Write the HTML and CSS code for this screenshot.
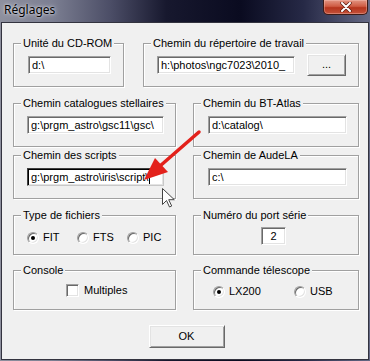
FILE: index.html
```html
<!DOCTYPE html>
<html lang="fr">
<head>
<meta charset="utf-8">
<title>Réglages</title>
<link rel="stylesheet" href="styles.css">
</head>
<body>
<div class="window">
  <div class="titlebar">
    <span class="title">Réglages</span>
    <div class="close">
      <svg width="12" height="10" viewBox="0 0 12 10"><path d="M2 1 L10 9 M10 1 L2 9" stroke="#5a1a10" stroke-width="3.4" stroke-linecap="round"/><path d="M2 1 L10 9 M10 1 L2 9" stroke="#fff" stroke-width="2" stroke-linecap="round"/></svg>
    </div>
  </div>
  <div class="client">
    <div class="row r1">
      <div class="group g-cd">
        <span class="legend">Unité du CD-ROM</span>
        <div class="body b-cd"><span class="edit w-cd">d:\</span></div>
      </div>
      <div class="group g-work">
        <span class="legend">Chemin du répertoire de travail</span>
        <div class="body b-work"><span class="edit w-work">h:\photos\ngc7023\2010_</span><span class="btn btn-dots">...</span></div>
      </div>
    </div>
    <div class="row r2">
      <div class="group g-left">
        <span class="legend">Chemin catalogues stellaires</span>
        <div class="body b-left"><span class="edit w-left">g:\prgm_astro\gsc11\gsc\</span></div>
      </div>
      <div class="group g-right">
        <span class="legend">Chemin du BT-Atlas</span>
        <div class="body b-right"><span class="edit w-right">d:\catalog\</span></div>
      </div>
    </div>
    <div class="row r3">
      <div class="group g-left">
        <span class="legend">Chemin des scripts</span>
        <div class="body b-left"><span class="edit w-left focus">g:\prgm_astro\iris\script\<span class="caret"></span></span></div>
      </div>
      <div class="group g-right">
        <span class="legend">Chemin de AudeLA</span>
        <div class="body b-right"><span class="edit w-right">c:\</span></div>
      </div>
    </div>
    <div class="row r4">
      <div class="group g-left short">
        <span class="legend">Type de fichiers</span>
        <div class="body b-radios">
          <span class="opt o-ft"><span class="radio on"></span>FIT</span>
          <span class="opt o-ft"><span class="radio"></span>FTS</span>
          <span class="opt"><span class="radio"></span>PIC</span>
        </div>
      </div>
      <div class="group g-right short">
        <span class="legend">Numéro du port série</span>
        <div class="body b-port"><span class="edit w-port">2</span></div>
      </div>
    </div>
    <div class="row r5">
      <div class="group g-left short">
        <span class="legend">Console</span>
        <div class="body b-console"><span class="opt"><span class="check"></span>Multiples</span></div>
      </div>
      <div class="group g-right short">
        <span class="legend">Commande télescope</span>
        <div class="body b-tel">
          <span class="opt o-lx"><span class="radio on"></span>LX200</span>
          <span class="opt"><span class="radio"></span>USB</span>
        </div>
      </div>
    </div>
    <div class="actions"><span class="btn btn-ok">OK</span></div>
  </div>
  <svg class="overlay" width="370" height="361" viewBox="0 0 370 361">
    <line x1="199" y1="132" x2="160" y2="166" stroke="#e3211b" stroke-width="3.5" stroke-linecap="round"/>
    <polygon points="144,180 155,158 168,172" fill="#e3211b"/>
    <path d="M162.5 188.5 V204.5 L166.5 200.5 L169.5 207 L171.7 206 L168.7 199.7 H174.3 Z" fill="#fff" stroke="#444" stroke-width="1" stroke-linejoin="round"/>
  </svg>
</div>
</body>
</html>
```
FILE: styles.css
```css
* { box-sizing: border-box; }
html, body { margin: 0; padding: 0; }
body {
  width: 370px;
  height: 361px;
  overflow: hidden;
  font-family: "Liberation Sans", Arial, sans-serif;
  font-size: 11px;
  color: #000;
  background: #000;
}
.window {
  position: relative;
  width: 370px;
  height: 361px;
  padding: 0 1px 1px 1px;
  display: flex;
  flex-direction: column;
  background: linear-gradient(90deg, #8e909e 0%, #7c7f92 14%, #4b4d66 30%, #17182e 45%, #0a0b20 65%, #262946 82%, #656985 100%);
}
.titlebar {
  height: 22px;
  flex: none;
  display: flex;
  justify-content: space-between;
  align-items: flex-start;
}
.title {
  font-family: "Noto Sans", "Liberation Sans", sans-serif;
  font-size: 12px;
  line-height: 16px;
  padding: 2px 0 0 3px;
  color: #000;
  text-shadow: 0 0 5px rgba(230, 232, 240, 0.9), 0 0 2px rgba(230, 232, 240, 0.9);
}
.close {
  width: 45px;
  height: 15px;
  margin-right: 1px;
  border: 1px solid #3c1a16;
  border-top: none;
  border-radius: 0 0 5px 5px;
  background: linear-gradient(#e29482, #cf5c44 45%, #b5341d 55%, #c4523a);
  box-shadow: inset 0 0 0 1px rgba(255, 210, 200, 0.35);
  display: flex;
  align-items: center;
  justify-content: center;
}
.client {
  flex: 1;
  background: #f0f0f0;
  border: 1px solid #33333f;
  padding: 20px 9px 0 11px;
  display: flex;
  flex-direction: column;
}
.row {
  display: flex;
  justify-content: space-between;
}
.r2 { margin-top: 16px; }
.r3 { margin-top: 8px; }
.r4 { margin-top: 16px; }
.r5 { margin-top: 15px; }
.group {
  height: 44px;
  border: 1px solid #a0a0a0;
  box-shadow: inset 1px 1px 0 #fff, 1px 1px 0 #fff;
}
.group.short { height: 40px; }
.g-cd { width: 111px; }
.g-work { width: 216px; }
.g-left { width: 163px; }
.g-right { width: 166px; }
.legend {
  display: block;
  width: fit-content;
  margin: -7px 0 0 7px;
  padding: 0 2px;
  line-height: 13px;
  background: #f0f0f0;
  white-space: nowrap;
}
.body { display: flex; align-items: center; }
.b-cd { padding: 6px 0 0 14px; }
.b-work { padding: 4px 0 0 13px; gap: 12px; }
.b-left { padding: 6px 0 0 13px; }
.b-right { padding: 6px 0 0 14px; }
.b-port { padding: 5px 0 0 67px; }
.b-radios { padding: 9px 0 0 13px; }
.b-console { padding: 7px 0 0 52px; }
.b-tel { padding: 8px 0 0 19px; }
.edit {
  display: block;
  height: 18px;
  background: #fff;
  border: 1px solid;
  border-color: #a0a0a0 #fff #fff #a0a0a0;
  box-shadow: inset 1px 1px 0 #696969, inset -1px -1px 0 #e3e3e3;
  padding: 2px 3px 0 3px;
  line-height: 13px;
  white-space: nowrap;
  overflow: hidden;
}
.edit.focus {
  border-color: #404040 #c8c8c8 #c8c8c8 #404040;
  box-shadow: inset 1px 1px 0 #000, inset -1px -1px 0 #e3e3e3;
}
.w-cd { width: 83px; }
.w-work { width: 138px; }
.w-left { width: 137px; }
.w-right { width: 139px; }
.w-port { width: 25px; text-align: center; }
.caret {
  display: inline-block;
  width: 1px;
  height: 13px;
  background: #000;
  vertical-align: top;
  margin-left: 1px;
}
.btn {
  display: flex;
  align-items: center;
  justify-content: center;
  background: #f0f0f0;
  border: 1px solid;
  border-color: #fff #696969 #696969 #fff;
  box-shadow: inset 1px 1px 0 #e3e3e3, inset -1px -1px 0 #a0a0a0;
  line-height: 13px;
}
.btn-dots { width: 39px; height: 22px; padding-bottom: 2px; }
.opt {
  display: flex;
  align-items: center;
  gap: 4px;
  white-space: nowrap;
  line-height: 13px;
}
.o-ft { width: 50px; }
.o-lx { width: 81px; }
.radio {
  position: relative;
  width: 12px;
  height: 12px;
  border-radius: 50%;
  background: #fff;
  border: 1px solid;
  border-color: #a0a0a0 #fff #fff #a0a0a0;
  box-shadow: inset 1px 1px 0 #696969, inset -1px -1px 0 #e3e3e3;
  flex: none;
}
.radio.on::after {
  content: "";
  position: absolute;
  left: 3px;
  top: 3px;
  width: 4px;
  height: 4px;
  border-radius: 50%;
  background: #000;
}
.check {
  width: 13px;
  height: 13px;
  background: #fff;
  border: 1px solid;
  border-color: #a0a0a0 #fff #fff #a0a0a0;
  box-shadow: inset 1px 1px 0 #696969, inset -1px -1px 0 #e3e3e3;
  flex: none;
  margin-right: 1px;
}
.actions {
  display: flex;
  justify-content: center;
  margin-top: 15px;
  padding-left: 1px;
}
.btn-ok { width: 76px; height: 23px; }
.overlay {
  position: absolute;
  left: 0;
  top: 0;
  pointer-events: none;
}
```
